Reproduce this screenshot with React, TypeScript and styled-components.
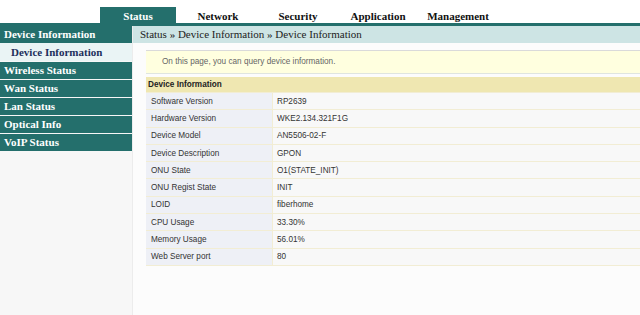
import React from "react";
import styled, { createGlobalStyle } from "styled-components";

const GlobalStyle = createGlobalStyle`
  html, body, #root { margin: 0; padding: 0; height: 100%; }
  body { background: #ffffff; overflow: hidden; }
`;

const TEAL = "#246f6c";

const Page = styled.div`
  display: flex;
  flex-direction: column;
  height: 315px;
  width: 640px;
  overflow: hidden;
`;

const Header = styled.div`
  height: 23px;
  display: flex;
  align-items: flex-end;
  padding-left: 100px;
  gap: 4px;
  background: #ffffff;
`;

const Tab = styled.div<{ $active?: boolean }>`
  width: 76px;
  height: 16px;
  line-height: 18px;
  text-align: center;
  font-family: "Liberation Serif", "Times New Roman", serif;
  font-weight: bold;
  font-size: 11px;
  color: ${(p) => (p.$active ? "#ffffff" : "#111111")};
  background: ${(p) => (p.$active ? TEAL : "transparent")};
`;

const Main = styled.div`
  flex: 1;
  display: flex;
  border-top: 3px solid ${TEAL};
  min-height: 0;
`;

const Sidebar = styled.div`
  width: 132px;
  flex-shrink: 0;
  background: #f7f7f7;
  border-right: 1px solid #ececec;
  font-family: "Liberation Serif", "Times New Roman", serif;
  font-weight: bold;
  font-size: 11px;
`;

const SideHeader = styled.div`
  height: 17px;
  line-height: 17px;
  padding-left: 4px;
  background: ${TEAL};
  color: #ffffff;
`;

const SubItem = styled.div`
  height: 18px;
  line-height: 18px;
  padding-left: 11px;
  background: #eaf4f5;
  color: #1d2f5c;
  margin-bottom: 1px;
`;

const MenuItem = styled.div`
  height: 17px;
  line-height: 17px;
  padding-left: 4px;
  background: ${TEAL};
  color: #ffffff;
  margin-bottom: 1px;
`;

const Content = styled.div`
  flex: 1;
  min-width: 0;
  background: #fcfcfc;
  overflow: hidden;
`;

const Breadcrumb = styled.div`
  height: 17px;
  line-height: 17px;
  padding-left: 7px;
  background: #cde4e4;
  color: #222222;
  font-family: "Liberation Serif", "Times New Roman", serif;
  font-size: 11px;
  white-space: nowrap;
`;

const Notice = styled.div`
  margin: 7px 0 0 13px;
  height: 22px;
  line-height: 22px;
  padding-left: 16px;
  background: #ffffdf;
  border-top: 1px solid #dadada;
  border-bottom: 1px solid #dfe5df;
  color: #666666;
  font-family: "Liberation Sans", Arial, sans-serif;
  font-size: 8.2px;
  white-space: nowrap;
`;

const Table = styled.table`
  margin: 3px 0 0 13px;
  width: calc(100% - 13px);
  border-collapse: collapse;
  font-family: "Liberation Sans", Arial, sans-serif;
  font-size: 8.2px;
  color: #333333;
`;

const HeadCell = styled.th`
  height: 15px;
  padding: 0 0 0 2px;
  text-align: left;
  font-weight: bold;
  color: #222222;
  background: #efe7b1;
  border-bottom: 1px solid #f2edd4;
`;

const LabelCell = styled.td`
  width: 121px;
  height: 16.3px;
  padding: 0 0 0 5px;
  background: #eef0f6;
  border-bottom: 1px solid #f2edd4;
  border-right: 1px solid #f2edd4;
  white-space: nowrap;
`;

const ValueCell = styled.td`
  height: 16.3px;
  padding: 0 0 0 4px;
  background: #f8f8f8;
  border-bottom: 1px solid #f2edd4;
  white-space: nowrap;
`;

const tabs = ["Status", "Network", "Security", "Application", "Management"];
const menu = ["Wireless Status", "Wan Status", "Lan Status", "Optical Info", "VoIP Status"];
const rows: [string, string][] = [
  ["Software Version", "RP2639"],
  ["Hardware Version", "WKE2.134.321F1G"],
  ["Device Model", "AN5506-02-F"],
  ["Device Description", "GPON"],
  ["ONU State", "O1(STATE_INIT)"],
  ["ONU Regist State", "INIT"],
  ["LOID", "fiberhome"],
  ["CPU Usage", "33.30%"],
  ["Memory Usage", "56.01%"],
  ["Web Server port", "80"],
];

export default function App() {
  return (
    <>
      <GlobalStyle />
      <Page>
        <Header>
          {tabs.map((t, i) => (
            <Tab key={t} $active={i === 0}>
              {t}
            </Tab>
          ))}
        </Header>
        <Main>
          <Sidebar>
            <SideHeader>Device Information</SideHeader>
            <SubItem>Device Information</SubItem>
            {menu.map((m) => (
              <MenuItem key={m}>{m}</MenuItem>
            ))}
          </Sidebar>
          <Content>
            <Breadcrumb>Status » Device Information » Device Information</Breadcrumb>
            <Notice>On this page, you can query device information.</Notice>
            <Table>
              <thead>
                <tr>
                  <HeadCell colSpan={2}>Device Information</HeadCell>
                </tr>
              </thead>
              <tbody>
                {rows.map(([k, v]) => (
                  <tr key={k}>
                    <LabelCell>{k}</LabelCell>
                    <ValueCell>{v}</ValueCell>
                  </tr>
                ))}
              </tbody>
            </Table>
          </Content>
        </Main>
      </Page>
    </>
  );
}
